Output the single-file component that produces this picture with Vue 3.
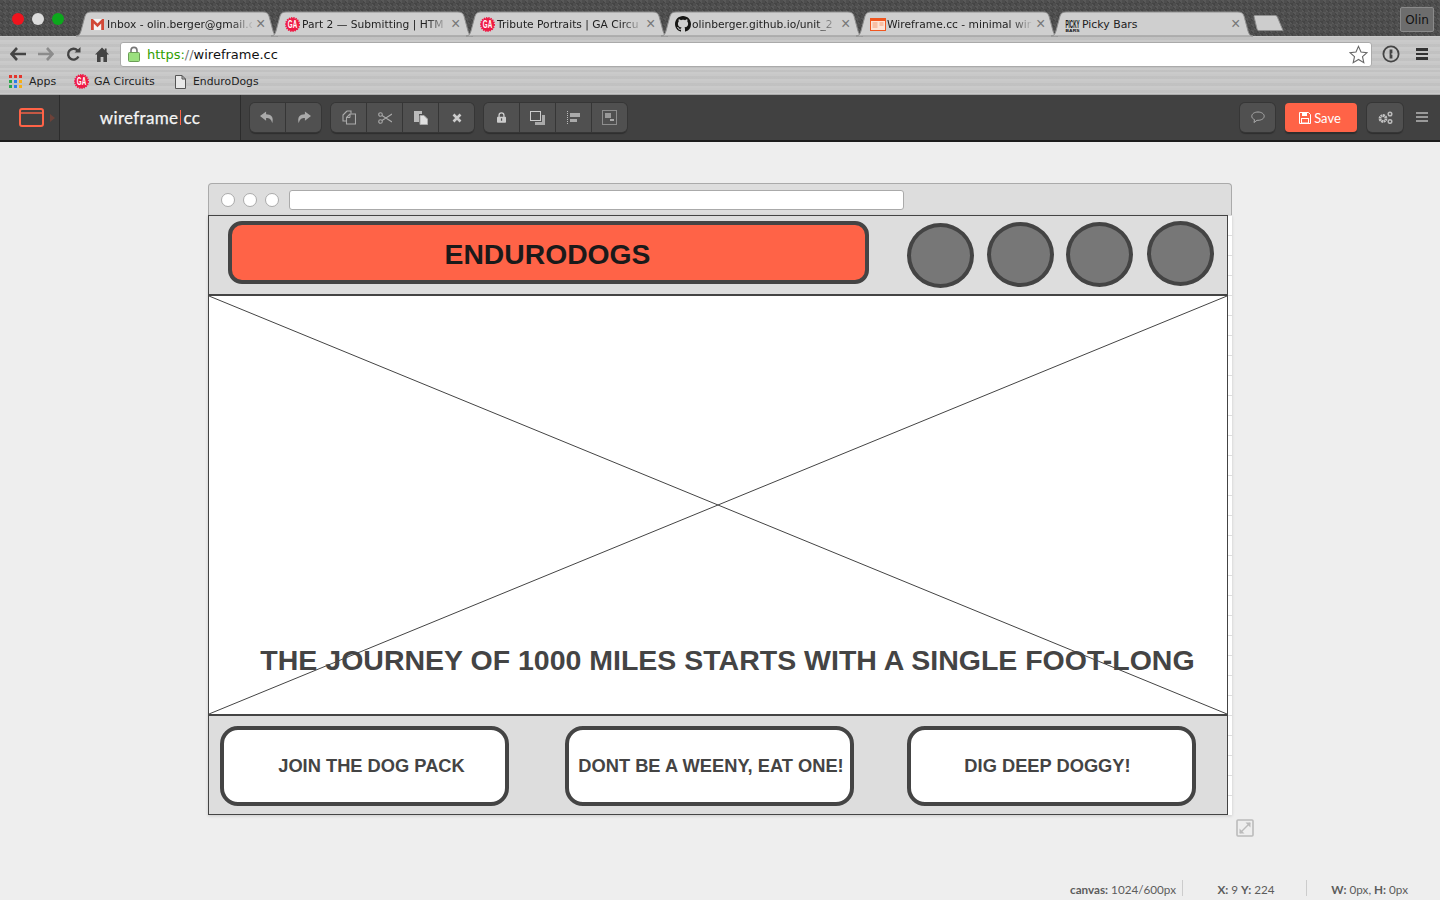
<template>
  <div class="app">
    <header class="chrome">
      <div class="tabstrip">
        <div class="traffic">
          <span class="light red"></span>
          <span class="light white"></span>
          <span class="light green"></span>
        </div>
        <div class="tabs">
          <div v-for="tab in tabs" :key="tab.title" class="tab">
            <svg class="tab-bg" width="202" height="24" viewBox="0 0 202 24">
              <path d="M0 24C3 24 4 22 5 19L9 4C10 1 12 0 15 0L187 0C190 0 192 1 193 4L197 19C198 22 199 24 202 24Z" fill="#cfcfcf" stroke="#8f8f8f" stroke-width="1" />
            </svg>
            <span class="tab-icon">
              <svg v-if="tab.icon === 'gmail'" width="15" height="13" viewBox="0 0 16 14">
                <rect x="1" y="1" width="14" height="12" fill="#f4f4f4" />
                <path d="M1 13V1h2l5 5 5-5h2v12h-3V6L8 10 4 6v7Z" fill="#d14836" />
              </svg>
              <svg v-else-if="tab.icon === 'ga'" class="badge" width="15" height="15" viewBox="0 0 16 16">
                <circle cx="8" cy="8" r="7" fill="#ef1a45" stroke="#ef1a45" stroke-width="2" stroke-dasharray="1.4 1" />
                <text x="8" y="12" class="ga-text" textLength="10" lengthAdjust="spacingAndGlyphs">GA</text>
              </svg>
              <svg v-else-if="tab.icon === 'github'" width="16" height="16" viewBox="0 0 16 16">
                <path fill="#161614" d="M8 0C3.58 0 0 3.58 0 8c0 3.54 2.29 6.53 5.47 7.59.4.07.55-.17.55-.38 0-.19-.01-.82-.01-1.49-2.01.37-2.53-.49-2.69-.94-.09-.23-.48-.94-.82-1.13-.28-.15-.68-.52-.01-.53.63-.01 1.08.58 1.23.82.72 1.21 1.87.87 2.33.66.07-.52.28-.87.51-1.07-1.78-.2-3.64-.89-3.64-3.95 0-.87.31-1.59.82-2.15-.08-.2-.36-1.02.08-2.12 0 0 .67-.21 2.2.82.64-.18 1.32-.27 2-.27.68 0 1.36.09 2 .27 1.53-1.04 2.2-.82 2.2-.82.44 1.1.16 1.92.08 2.12.51.56.82 1.27.82 2.15 0 3.07-1.87 3.75-3.65 3.95.29.25.54.73.54 1.48 0 1.07-.01 1.93-.01 2.2 0 .21.15.46.55.38A8.013 8.013 0 0016 8c0-4.42-3.58-8-8-8z" />
              </svg>
              <svg v-else-if="tab.icon === 'wire'" width="16" height="13" viewBox="0 0 16 13">
                <rect x="0.5" y="0.5" width="15" height="12" fill="#fde3d6" stroke="#f0561f" />
                <rect x="1" y="1" width="14" height="2" fill="#f0561f" />
                <path d="M2.5 5h5M2.5 7h5M2.5 9h5M9.5 5h4M9.5 7h4" stroke="#f39a73" />
              </svg>
              <svg v-else class="badge" width="15" height="16" viewBox="0 0 15 16">
                <text x="7.5" y="11.5" class="picky-text" textLength="14" lengthAdjust="spacingAndGlyphs">PICKY</text>
                <text x="7.5" y="15.5" class="bars-text" textLength="14" lengthAdjust="spacingAndGlyphs">BARS</text>
              </svg>
            </span>
            <span class="tab-title" :class="{ 'no-fade': tab.icon === 'picky' }">{{ tab.title }}</span>
            <span class="tab-close">×</span>
          </div>
          <svg class="newtab" width="32" height="16" viewBox="0 0 32 16">
            <path d="M1 1.5C1 .8 1.5.5 2 .5L22 .5C23 .5 24 1 24.4 2L30 15.5 6 15.5C5 15.5 4.4 15 4 14Z" fill="#cdcdcd" stroke="#8f8f8f" />
          </svg>
        </div>
        <button class="profile">Olin</button>
      </div>

      <div class="addressbar">
        <div class="navs">
          <svg width="16" height="14" viewBox="0 0 16 14"><path d="M7 1 1.5 7 7 13M2 7h14" fill="none" stroke="#444" stroke-width="2.6" /></svg>
          <svg width="16" height="14" viewBox="0 0 16 14"><path d="M9 1l5.5 6L9 13M14 7H0" fill="none" stroke="#8c8c8c" stroke-width="2.6" /></svg>
          <svg width="15" height="15" viewBox="0 0 15 15"><path d="M12.4 9.5A5.4 5.4 0 1 1 11.4 3.4" fill="none" stroke="#444" stroke-width="2.4" /><path d="M8.6 5.6h5.9V0Z" fill="#444" /></svg>
          <svg class="home" width="14" height="15" viewBox="0 0 14 15"><path d="M7 .5 0 7.5h2V15h3.6v-5h2.8v5H12V7.5h2l-2.4-2.4V1.4H9.8v1.9Z" fill="#444" /></svg>
        </div>
        <div class="omnibox">
          <svg class="lock" width="12" height="16" viewBox="0 0 12 16">
            <path d="M3 7V4.4a3 3 0 0 1 6 0V7" fill="none" stroke="#777" stroke-width="1.6" />
            <rect x="0.5" y="6.5" width="11" height="9" rx="1" fill="#9be07f" stroke="#6b9e57" />
          </svg>
          <span class="url"><span class="scheme">https:</span><span class="slashes">//</span>wireframe.cc</span>
          <svg class="star" width="19" height="19" viewBox="0 0 19 19">
            <path d="M9.5 1.4 12 7l6 .6-4.5 4 1.3 6-5.3-3.1-5.3 3.1 1.3-6L1 7.6 7 7Z" fill="#fff" stroke="#666" stroke-width="1.1" />
          </svg>
        </div>
        <svg class="onepass" width="18" height="18" viewBox="0 0 18 18">
          <circle cx="9" cy="9" r="7.6" fill="none" stroke="#444" stroke-width="1.8" />
          <path d="M7.6 4.4h2.8v3.8H9.4v1.6h1v3.8H7.6Z" fill="#444" />
        </svg>
        <div class="burger dark"><i></i><i></i><i></i></div>
      </div>

      <div class="bookmarks">
        <span class="bookmark apps-mark">
          <span class="apps-grid"><i v-for="(c, i) in appColors" :key="i" :class="c"></i></span>
          Apps
        </span>
        <span class="bookmark ga-mark">
          <svg class="badge" width="15" height="15" viewBox="0 0 16 16">
            <circle cx="8" cy="8" r="7" fill="#ef1a45" stroke="#ef1a45" stroke-width="2" stroke-dasharray="1.4 1" />
            <text x="8" y="12" class="ga-text" textLength="10" lengthAdjust="spacingAndGlyphs">GA</text>
          </svg>
          GA Circuits
        </span>
        <span class="bookmark doc-mark">
          <svg width="11" height="14" viewBox="0 0 11 14"><path d="M.5.5h6.5l3.5 3.5v9.500H.5ZM7 .5V4h3.5" fill="#e9e9e9" stroke="#555" /></svg>
          EnduroDogs
        </span>
      </div>
    </header>

    <nav class="toolbar">
      <div class="logo-cell">
        <svg width="25" height="19" viewBox="0 0 25 19">
          <rect x="1" y="1" width="23" height="17" rx="2" fill="none" stroke="#ff6347" stroke-width="2" />
          <path d="M1 5h23" stroke="#ff6347" stroke-width="1.4" />
        </svg>
        <span class="logo-arrow"></span>
      </div>
      <div class="brand">wireframe<span class="brand-bar"></span>cc</div>
      <div class="btn-groups">
        <div class="btn-group">
          <button class="tool"><svg width="15" height="13" viewBox="0 0 16 13"><path d="M6.500 0 0 5l6.500 5V7c3.500 0 5.500 1 6.500 5.500 2-6-1-9.500-6.500-9.500Z" fill="#aaa" /></svg></button>
          <button class="tool"><svg width="15" height="13" viewBox="0 0 16 13"><path d="M9.500 0 16 5l-6.500 5V7C6 7 4 8 3 12.500 1 6.500 4 3 9.500 3Z" fill="#aaa" /></svg></button>
        </div>
        <div class="btn-group">
          <button class="tool"><svg width="14" height="15" viewBox="0 0 14 15"><path d="M5 1 1 5v6h3M5 1h4v2.500" fill="none" stroke="#aaa" stroke-width="1.100" /><path d="M8 4 4.500 7.500V14h9V4Z" fill="none" stroke="#aaa" stroke-width="1.100" /><path d="M8 4v3.500H4.500" fill="none" stroke="#aaa" /></svg></button>
          <button class="tool"><svg width="14" height="12" viewBox="0 0 14 12"><circle cx="2.500" cy="2.500" r="1.800" fill="none" stroke="#aaa" stroke-width="1.100" /><circle cx="2.500" cy="9.500" r="1.800" fill="none" stroke="#aaa" stroke-width="1.100" /><path d="M4 3.500 14 10M4 8.500 14 2" stroke="#aaa" stroke-width="1.100" /></svg></button>
          <button class="tool"><svg width="14" height="14" viewBox="0 0 14 14"><path d="M0 0h8v3H5v8H0Z" fill="#bbb" /><path d="M6 4.500h4L13.500 8v5.500H6Z" fill="#e0e0e0" stroke="#aaa" /></svg></button>
          <button class="tool"><svg width="10" height="10" viewBox="0 0 10 10"><path d="M1.500 1.500l7 7M8.500 1.500l-7 7" stroke="#ccc" stroke-width="2.600" /></svg></button>
        </div>
        <div class="btn-group">
          <button class="tool"><svg width="9" height="11" viewBox="0 0 11 13"><path d="M2.500 6V3.800a3 3 0 0 1 6 0V6" fill="none" stroke="#ccc" stroke-width="1.600" /><rect y="5.500" width="11" height="7.500" rx="1" fill="#ccc" /><rect x="4.800" y="7.500" width="1.500" height="3" fill="#4f4f4f" /></svg></button>
          <button class="tool"><svg width="15" height="14" viewBox="0 0 15 14"><rect x="0.500" y="0.500" width="10" height="9" fill="none" stroke="#ccc" /><path d="M12 4h3v10H5v-3h7Z" fill="#aaa" /></svg></button>
          <button class="tool"><svg width="13" height="14" viewBox="0 0 13 14"><path d="M.5 0v14" stroke="#bbb" stroke-dasharray="1 1" /><rect x="3" y="2" width="10" height="4" fill="#aaa" /><rect x="3" y="8" width="7" height="3" fill="#aaa" /></svg></button>
          <button class="tool"><svg width="15" height="15" viewBox="0 0 15 15"><rect x="0.500" y="0.500" width="14" height="14" fill="none" stroke="#ccc" stroke-dasharray="1 1" /><rect x="3" y="3" width="6" height="5" fill="#999" /><rect x="8" y="9" width="4" height="2" fill="#aaa" /></svg></button>
        </div>
      </div>
      <div class="right-tools">
        <button class="tool single chat"><svg width="14" height="13" viewBox="0 0 14 13"><path d="M7 1C3.500 1 .8 2.800.8 5.200c0 1.500 1 2.700 2.700 3.400L3 11.500 6 9.300h1c3.500 0 6.200-1.800 6.200-4.100S10.500 1 7 1Z" fill="none" stroke="#aaa" /></svg></button>
        <button class="save">
          <svg width="12" height="12" viewBox="0 0 12 12"><path d="M.5.5h9l2 2v9H.5Z" fill="none" stroke="#fff" /><rect x="3" y="1" width="5" height="3" fill="#fff" /><rect x="2.500" y="6.500" width="7" height="4.500" fill="none" stroke="#fff" /></svg>
          Save
        </button>
        <button class="tool single"><svg width="15" height="13" viewBox="0 0 15 13"><circle cx="5" cy="7.500" r="3" fill="none" stroke="#c4c4c4" stroke-width="2.800" stroke-dasharray="1.800 .5" /><circle cx="12" cy="3" r="1.800" fill="none" stroke="#bbb" stroke-width="1.500" /><circle cx="12" cy="10.500" r="1.800" fill="none" stroke="#bbb" stroke-width="1.500" /></svg></button>
        <div class="burger light"><i></i><i></i><i></i></div>
      </div>
    </nav>

    <main class="workspace">
      <div class="window">
        <div class="window-head">
          <span class="win-dot"></span>
          <span class="win-dot"></span>
          <span class="win-dot"></span>
          <span class="win-url"></span>
        </div>
        <div class="canvas-row">
          <section class="canvas">
            <div class="top-row">
              <div class="title-box">ENDURODOGS</div>
              <div class="circles">
                <span v-for="n in 4" :key="n" class="circle"></span>
              </div>
            </div>
            <div class="hero">
              <svg class="hero-cross" viewBox="0 0 1018 418" preserveAspectRatio="none">
                <path d="M0 0 1018 418M1018 0 0 418" stroke="#444" stroke-width="1" fill="none" />
              </svg>
              <h2 class="hero-text">THE JOURNEY OF 1000 MILES STARTS WITH A SINGLE FOOT-LONG</h2>
            </div>
            <div class="cta-row">
              <div class="cta">JOIN THE DOG PACK</div>
              <div class="cta">DONT BE A WEENY, EAT ONE!</div>
              <div class="cta">DIG DEEP DOGGY!</div>
            </div>
          </section>
          <div class="ruler"></div>
        </div>
        <svg class="resize" width="18" height="18" viewBox="0 0 18 18">
          <rect x="1" y="1" width="16" height="16" rx="1" fill="none" stroke="#bbb" stroke-width="1.600" />
          <path d="M4 14l10-10" stroke="#bbb" stroke-width="1.400" />
          <path d="M9.500 3.500H14.500V8.500ZM3.500 9.500V14.500H8.500Z" fill="#bbb" />
        </svg>
      </div>
    </main>

    <footer class="status">
      <span class="stat stat-canvas"><b>canvas:</b> 1024/600px</span>
      <span class="stat stat-pos"><b>X:</b> 9 <b>Y:</b> 224</span>
      <span class="stat stat-size"><b>W:</b> 0px, <b>H:</b> 0px</span>
    </footer>
  </div>
</template>

<script setup>
const tabs = [
  { icon: 'gmail', title: 'Inbox - olin.berger@gmail.c' },
  { icon: 'ga', title: 'Part 2 — Submitting | HTM' },
  { icon: 'ga', title: 'Tribute Portraits | GA Circu' },
  { icon: 'github', title: 'olinberger.github.io/unit_2' },
  { icon: 'wire', title: 'Wireframe.cc - minimal wir' },
  { icon: 'picky', title: 'Picky Bars' }
]

const appColors = ['r', 'r', 'r', 'g', 'b', 'y', 'g', 'b', 'y']
</script>

<style>
html, body {
  margin: 0;
  background: #eee;
}
</style>

<style scoped>
.app {
  width: 1440px;
  height: 900px;
  overflow: hidden;
  display: flex;
  flex-direction: column;
  background: #eee;
  font-family: "DejaVu Sans", sans-serif;
}

/* browser chrome */
.tabstrip {
  height: 36px;
  display: flex;
  position: relative;
  background-color: #4e4e4e;
  background-image:
    linear-gradient(45deg, #585858 25%, transparent 25%, transparent 75%, #585858 75%),
    linear-gradient(45deg, #454545 25%, transparent 25%, transparent 75%, #454545 75%);
  background-size: 6px 6px;
  background-position: 0 0, 3px 3px;
}
.traffic {
  width: 76px;
  flex: none;
  display: flex;
  gap: 8px;
  padding: 13px 0 0 12px;
  box-sizing: border-box;
}
.light {
  width: 12px;
  height: 12px;
  border-radius: 50%;
}
.light.red { background: #f0141e; }
.light.white { background: #dcdcdc; }
.light.green { background: #0ca81c; }
.tabs {
  display: flex;
  align-items: flex-end;
  height: 36px;
}
.tab {
  width: 195px;
  height: 24px;
  position: relative;
  flex: none;
  display: flex;
  align-items: center;
  padding-left: 14px;
  box-sizing: border-box;
}
.tab-bg {
  position: absolute;
  left: 0;
  top: 0;
  overflow: visible;
}
.badge {
  overflow: visible;
}
.tab-icon {
  position: relative;
  width: 17px;
  flex: none;
  height: 16px;
  display: flex;
  align-items: center;
}
.tab-title {
  position: relative;
  width: 145px;
  flex: none;
  font-size: 10.7px;
  white-space: nowrap;
  color: #222;
  -webkit-mask-image: linear-gradient(90deg, #000 86%, rgba(0,0,0,.15) 99%);
  mask-image: linear-gradient(90deg, #000 86%, rgba(0,0,0,.15) 99%);
}
.tab-title.no-fade {
  -webkit-mask-image: none;
  mask-image: none;
  font-size: 10.9px;
}
.tab-close {
  position: relative;
  margin-left: 4px;
  font-size: 16px;
  line-height: 16px;
  color: #777;
  font-family: "Liberation Sans", sans-serif;
}
.ga-text {
  font: bold 11px "Liberation Sans", sans-serif;
  fill: #fff;
  text-anchor: middle;
}
.picky-text {
  font: bold 11px "Liberation Sans", sans-serif;
  fill: #111;
  text-anchor: middle;
}
.bars-text {
  font: bold 4px "Liberation Sans", sans-serif;
  fill: #111;
  text-anchor: middle;
}
.newtab {
  position: relative;
  flex: none;
  margin: 0 0 5px 7px;
}
.profile {
  position: absolute;
  top: 7px;
  right: 6px;
  width: 34px;
  height: 25px;
  padding: 0;
  border: 1px solid #8a8a8a;
  border-radius: 2px;
  background: #6d6d6d;
  color: #111;
  font: 12px "DejaVu Sans", sans-serif;
}
.addressbar,
.bookmarks {
  background-color: #c6c6c6;
  background-image: repeating-linear-gradient(0deg, rgba(255,255,255,.08) 0, rgba(255,255,255,.08) 2px, rgba(0,0,0,.025) 2px, rgba(0,0,0,.025) 5px, rgba(255,255,255,.04) 5px, rgba(255,255,255,.04) 7px);
}
.addressbar {
  height: 34px;
  display: flex;
  align-items: center;
  box-sizing: border-box;
  padding: 2px 12px 0 10px;
}
.navs {
  width: 110px;
  flex: none;
  display: flex;
  align-items: center;
  gap: 12px;
}
.home {
  margin-left: 2px;
}
.omnibox {
  width: 1252px;
  height: 25px;
  flex: none;
  box-sizing: border-box;
  display: flex;
  align-items: center;
  background: #fff;
  border: 1px solid #aaa;
  border-radius: 3px;
  padding: 0 3px 0 7px;
}
.lock { flex: none; }
.url {
  margin-left: 7px;
  flex: 1;
  font-size: 13px;
  color: #111;
}
.scheme { color: #2f9e00; }
.slashes { color: #777; }
.onepass {
  flex: none;
  margin-left: 10px;
}
.burger {
  display: flex;
  flex-direction: column;
  gap: 2px;
  width: 12px;
  flex: none;
}
.burger i {
  display: block;
  height: 2.5px;
}
.burger.dark {
  margin-left: 16px;
}
.burger.dark i { background: #333; }
.burger.light i { background: #9a9a9a; height: 2px; }
.bookmarks {
  height: 25px;
  box-sizing: border-box;
  padding-bottom: 2px;
  display: flex;
  align-items: center;
  font-size: 11px;
  color: #222;
  box-shadow: inset 0 -1px 0 #aaa;
}
.bookmark {
  display: flex;
  align-items: center;
}
.apps-mark {
  width: 74px;
  padding-left: 9px;
  gap: 7px;
  box-sizing: border-box;
}
.apps-grid {
  display: grid;
  grid-template-columns: repeat(3, 3px);
  gap: 2px;
  flex: none;
}
.apps-grid i { width: 3px; height: 3px; }
.apps-grid .r { background: #e3352c; }
.apps-grid .y { background: #f7ae14; }
.apps-grid .b { background: #2b7de9; }
.apps-grid .g { background: #2aa84a; }
.ga-mark {
  width: 101px;
  gap: 5px;
}
.doc-mark {
  gap: 7px;
  font-size: 10.8px;
}

/* wireframe.cc toolbar */
.toolbar {
  height: 47px;
  flex: none;
  box-sizing: border-box;
  display: flex;
  align-items: stretch;
  background: #414141;
  border-bottom: 2px solid #1c1c1c;
}
.logo-cell {
  width: 60px;
  flex: none;
  box-sizing: border-box;
  border-right: 1px solid #2c2c2c;
  display: flex;
  align-items: center;
  padding-left: 19px;
}
.logo-arrow {
  margin-left: 6px;
  border-left: 5px solid #6e4239;
  border-top: 4px solid transparent;
  border-bottom: 4px solid transparent;
}
.brand {
  width: 181px;
  flex: none;
  box-sizing: border-box;
  border-right: 1px solid #2c2c2c;
  display: flex;
  align-items: center;
  justify-content: center;
  color: #f4f4f4;
  font: 17px Lato, sans-serif;
  letter-spacing: .33px;
  -webkit-text-stroke: .25px #f4f4f4;
}
.brand-bar {
  width: 1px;
  height: 15px;
  margin: 0 2px;
  background: #ff6347;
}
.btn-groups {
  display: flex;
  gap: 10px;
  padding: 8px 0 0 9px;
}
.btn-group {
  display: flex;
  height: 29px;
  border-radius: 5px;
  box-shadow: 0 0 0 1px #363636, 0 2px 1px #2e2e2e;
  overflow: hidden;
}
.tool {
  width: 36px;
  height: 29px;
  padding: 0;
  display: flex;
  align-items: center;
  justify-content: center;
  background: #505050;
  border: 0;
  border-right: 1px solid #363636;
}
.tool:last-child {
  width: 35px;
  border-right: 0;
}
.right-tools {
  margin-left: auto;
  display: flex;
  align-items: flex-start;
  padding: 8px 12px 0 0;
}
.tool.single {
  width: 36px;
  border: 0;
  border-radius: 5px;
  box-shadow: 0 0 0 1px #363636, 0 2px 1px #2e2e2e;
}
.tool.single.chat { width: 35px; }
.save {
  width: 72px;
  height: 29px;
  margin: 0 10px;
  padding: 0 2px 0 0;
  border: 0;
  border-radius: 4px;
  display: flex;
  align-items: center;
  justify-content: center;
  gap: 3px;
  background: #ff6347;
  color: #fff;
  font: 13px Lato, sans-serif;
  box-shadow: 0 2px 1px #2e2e2e;
}
.burger.light {
  margin: 9px 0 0 13px;
}

/* canvas area */
.workspace {
  flex: 1;
  position: relative;
  padding: 41px 0 0 208px;
}
.window {
  width: 1024px;
  position: relative;
}
.window-head {
  height: 32px;
  box-sizing: border-box;
  display: flex;
  align-items: center;
  padding: 1px 0 0 12px;
  gap: 8px;
  background: #ddd;
  border: 1px solid #aaa;
  border-bottom: 0;
  border-radius: 4px 4px 0 0;
}
.win-dot {
  width: 14px;
  height: 14px;
  box-sizing: border-box;
  border-radius: 50%;
  background: #fff;
  border: 1px solid #aaa;
}
.win-url {
  width: 615px;
  height: 20px;
  margin-left: 2px;
  box-sizing: border-box;
  background: #fff;
  border: 1px solid #aaa;
  border-radius: 3px;
}
.canvas-row {
  display: flex;
  box-shadow: 0 1px 3px rgba(0,0,0,.15);
}
.canvas {
  width: 1020px;
  height: 600px;
  flex: none;
  box-sizing: border-box;
  border: 1px solid #444;
  background: #ddd;
  display: flex;
  flex-direction: column;
}
.ruler {
  flex: 1;
  background: repeating-linear-gradient(180deg, #fff 0, #fff 19px, #ddd 19px, #ddd 20px) 0 1px;
}
.top-row {
  height: 78px;
  flex: none;
  display: flex;
  padding: 5px 0 0 19px;
  box-sizing: border-box;
}
.title-box {
  width: 641px;
  height: 63px;
  box-sizing: border-box;
  border: 4px solid #444;
  border-radius: 14px;
  background: #ff6347;
  display: flex;
  align-items: center;
  justify-content: center;
  padding: 4px 2px 0 0;
  color: #1a1a1a;
  font: bold 28.3px "Liberation Sans", sans-serif;
}
.circles {
  display: flex;
  margin-left: 38px;
  gap: 13px;
  padding-top: 2px;
}
.circle {
  width: 67px;
  height: 65px;
  box-sizing: border-box;
  border: 4px solid #444;
  border-radius: 50%;
  background: #777;
}
.circle:nth-child(n+2) { margin-top: -1px; }
.circle:nth-child(3) { margin-left: -1px; }
.circle:nth-child(4) { margin-top: -2px; margin-left: 1px; }
.hero {
  height: 422px;
  flex: none;
  box-sizing: border-box;
  border-top: 2px solid #444;
  border-bottom: 2px solid #444;
  background: #fff;
  position: relative;
  display: flex;
  align-items: flex-end;
  justify-content: center;
}
.hero-cross {
  position: absolute;
  left: 0;
  top: 0;
  width: 100%;
  height: 100%;
}
.hero-text {
  position: relative;
  margin: 0 0 37px 19px;
  color: #444;
  font: bold 28.5px "Liberation Sans", sans-serif;
  white-space: nowrap;
}
.cta-row {
  flex: 1;
  display: flex;
  gap: 56px;
  padding: 10px 0 0 11px;
}
.cta {
  width: 289px;
  height: 80px;
  flex: none;
  box-sizing: border-box;
  border: 4px solid #444;
  border-radius: 18px;
  background: #fff;
  display: flex;
  align-items: center;
  justify-content: center;
  color: #444;
  font: bold 18.3px "Liberation Sans", sans-serif;
  white-space: nowrap;
}
.cta:nth-child(1) { padding-left: 14px; }
.cta:nth-child(2) { padding-left: 3px; }
.cta:nth-child(3) { margin-left: -3px; padding-right: 8px; }
.resize {
  position: absolute;
  left: 1028px;
  top: 636px;
}

/* status line */
.status {
  position: absolute;
  left: 0;
  right: 0;
  top: 880px;
  height: 20px;
  display: flex;
  justify-content: flex-end;
  padding-right: 32px;
  color: #5c5c5c;
  font: 11.7px Lato, sans-serif;
}
.status b { font-weight: 700; }
.stat {
  box-sizing: border-box;
  height: 16px;
  line-height: 18px;
  text-align: center;
}
.stat-canvas {
  padding-right: 6px;
  border-right: 1px solid #ccc;
}
.stat-pos {
  width: 124px;
  border-right: 1px solid #ccc;
  padding-left: 3px;
}
.stat-size {
  width: 101px;
  text-align: right;
}
</style>
